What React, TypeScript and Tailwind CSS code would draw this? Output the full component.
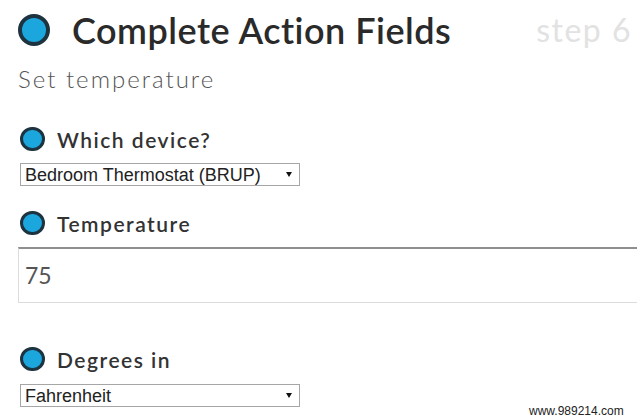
import React from "react";

const heading = { fontFamily: '"Lato", "Open Sans", sans-serif' };
const arial = { fontFamily: '"Liberation Sans", Arial, sans-serif' };

function Dot({ big }: { big?: boolean }) {
  return (
    <span
      className={
        big
          ? "block w-[32px] h-[32px] rounded-full border-[4px] border-[#1d3340] bg-[#1ba6de] shrink-0"
          : "block w-[25px] h-[24px] rounded-full border-[3px] border-[#1d3340] bg-[#1ba6de] shrink-0"
      }
    />
  );
}

function FieldLabel({ children }: { children: React.ReactNode }) {
  return (
    <div className="flex items-center h-[24px] pl-[20px] gap-[12px]">
      <Dot />
      <span className="text-[21px] leading-none font-semibold tracking-[1.5px] text-[#333]" style={heading}>
        {children}
      </span>
    </div>
  );
}

function FakeSelect({ value }: { value: string }) {
  return (
    <div
      className="ml-[20px] w-[280px] h-[23px] border border-[#a6a6a6] bg-white flex items-center justify-between pl-[4px] pr-[7px] text-[18px] leading-none text-[#222]"
      style={arial}
    >
      <span>{value}</span>
      <svg width="6" height="5" viewBox="0 0 6 5">
        <path d="M0 0 H6 L3 5 Z" fill="#111" />
      </svg>
    </div>
  );
}

export default function App() {
  return (
    <div className="relative w-[637px] h-[420px] bg-white overflow-hidden">
      {/* header */}
      <div className="flex items-center h-[36px] mt-[12px] pl-[18px]">
        <Dot big />
        <span
          className="ml-[22px] text-[36px] leading-none font-semibold tracking-[0.5px] text-[#2a2a2a]"
          style={heading}
        >
          Complete Action Fields
        </span>
        <span className="ml-auto mr-[5px] text-[32px] leading-none tracking-[1.5px] text-[#e2e2e2]" style={heading}>
          step 6
        </span>
      </div>
      <div className="mt-[19px] pl-[18px] text-[24px] leading-none font-light tracking-[2px] text-[#555]" style={heading}>
        Set temperature
      </div>

      <div className="mt-[36px]">
        <FieldLabel>Which device?</FieldLabel>
      </div>
      <div className="mt-[12px]">
        <FakeSelect value="Bedroom Thermostat (BRUP)" />
      </div>

      <div className="mt-[25px]">
        <FieldLabel>Temperature</FieldLabel>
      </div>
      <div className="mt-[12px] ml-[18px] w-[640px] h-[56px] border border-[#dcdcdc] border-t-[2px] border-t-[#8f8f8f] flex items-center pl-[6px]">
        <span className="text-[23px] leading-none text-[#555]" style={heading}>
          75
        </span>
      </div>

      <div className="mt-[44px]">
        <FieldLabel>Degrees in</FieldLabel>
      </div>
      <div className="mt-[13px]">
        <FakeSelect value="Fahrenheit" />
      </div>

      <div className="absolute left-[529px] top-[405px] text-[12px] leading-none text-[#222]" style={arial}>
        www.989214.com
      </div>
    </div>
  );
}
